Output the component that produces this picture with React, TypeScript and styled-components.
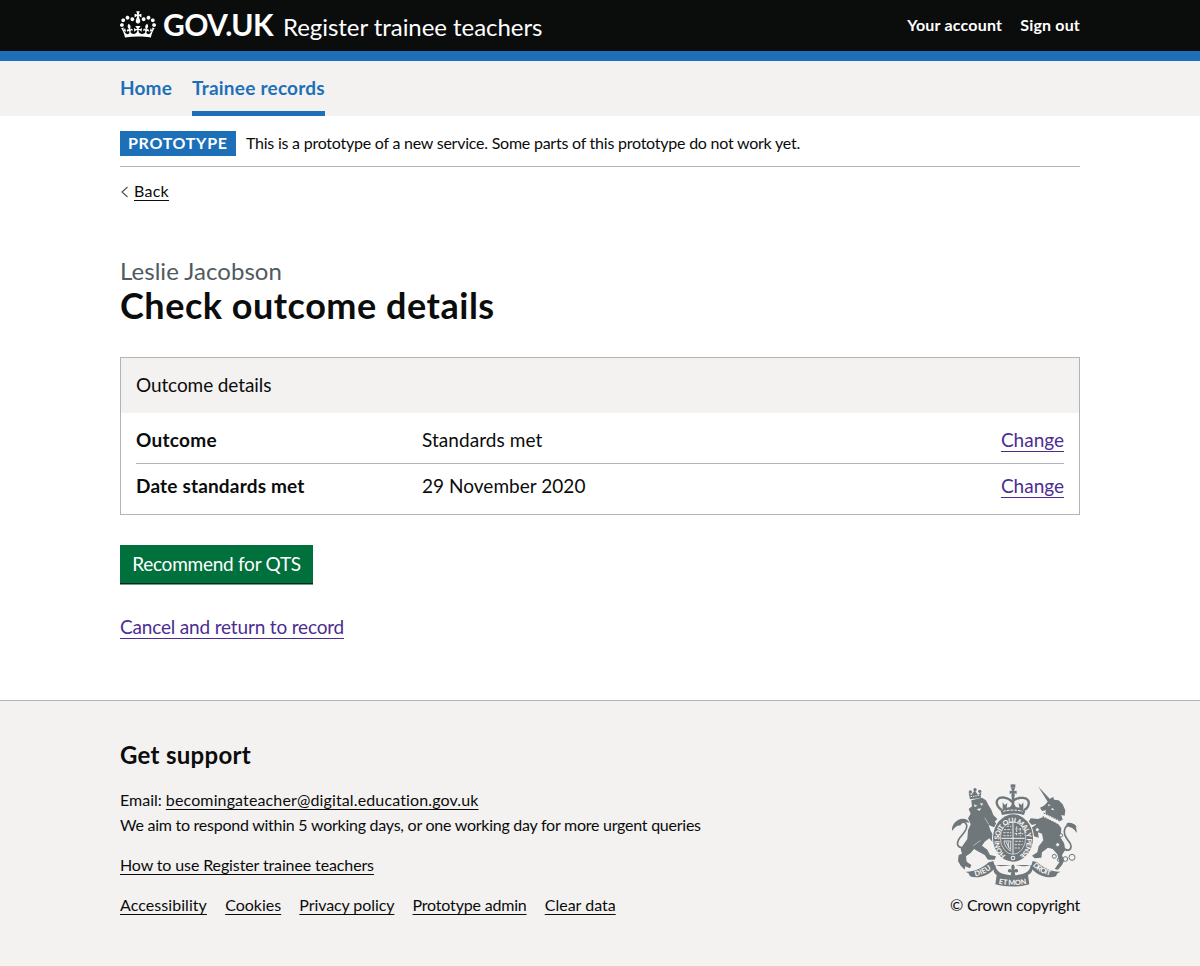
import React from 'react';
import styled, { createGlobalStyle } from 'styled-components';

const c = {
  black: '#0b0c0c',
  blue: '#1d70b8',
  grey: '#f3f2f1',
  border: '#b1b4b6',
  secondary: '#505a5f',
  visited: '#4c2c92',
  green: '#00703c',
  crest: '#6f777b',
};

const Global = createGlobalStyle`
  * { box-sizing: border-box; }
  html, body { margin: 0; padding: 0; }
  body {
    font-family: Lato, "Liberation Sans", sans-serif;
    color: ${c.black};
    background: #fff;
  }
`;

const Page = styled.div`
  min-height: 966px;
  display: flex;
  flex-direction: column;
`;

const Container = styled.div`
  width: 960px;
  margin: 0 auto;
`;

const Txt = styled.span<{ $track?: number }>`
  letter-spacing: ${p => p.$track ?? 0}px;
  white-space: nowrap;
`;

const Header = styled.header`
  background: ${c.black};
  border-bottom: 10px solid ${c.blue};
  height: 61px;
  color: #fff;
`;

const HeaderRow = styled(Container)`
  display: flex;
  height: 51px;
  align-items: flex-start;
`;

const CrownIcon = styled.svg`
  display: block;
  width: 36px;
  height: 27px;
  margin: 11px 7px 0 0;
  fill: #fff;
`;

const Logo = styled(Txt)`
  font-size: 30px;
  font-weight: 700;
  line-height: 36px;
  margin-top: 6px;
  width: 120px;
`;

const ServiceName = styled(Txt)`
  font-size: 24px;
  line-height: 30px;
  margin-top: 12px;
`;

const Account = styled.nav`
  margin-left: auto;
  padding-top: 15px;
  display: flex;
  gap: 18px;
  font-size: 16px;
  font-weight: 700;
  line-height: 20px;
`;

const NavBar = styled.nav`
  background: ${c.grey};
  height: 55px;
`;

const NavRow = styled(Container)`
  display: flex;
  gap: 20px;
`;

const NavItem = styled.a<{ $current?: boolean }>`
  height: 55px;
  padding-top: 14px;
  font-size: 19px;
  font-weight: 700;
  line-height: 25px;
  color: ${c.blue};
  border-bottom: ${p => (p.$current ? `5px solid ${c.blue}` : 'none')};
`;

const Phase = styled(Container)`
  display: flex;
  padding: 15px 0 10px;
  border-bottom: 1px solid ${c.border};
  font-size: 16px;
  line-height: 20px;
`;

const Tag = styled.strong`
  background: ${c.blue};
  color: #fff;
  width: 116px;
  height: 25px;
  padding: 2px 0 3px 8px;
  margin-right: 10px;
`;

const PhaseText = styled.span`
  padding-top: 2px;
`;

const BackRow = styled(Container)`
  display: flex;
  align-items: center;
  height: 20px;
  margin-top: 14px;
  font-size: 16px;
  line-height: 20px;
`;

const Chevron = styled.svg`
  width: 14px;
  height: 14px;
  margin-top: 1px;
  fill: none;
  stroke: ${c.secondary};
  stroke-width: 1.2;
`;

const Link = styled.a<{ $visited?: boolean; $offset?: number }>`
  color: ${p => (p.$visited ? c.visited : c.black)};
  text-decoration: underline;
  text-decoration-thickness: 1px;
  text-underline-offset: ${p => p.$offset ?? 3}px;
  text-decoration-skip-ink: none;
`;

const Main = styled(Container)`
  height: 499px;
  padding-top: 55px;
`;

const Caption = styled.div`
  color: ${c.secondary};
  font-size: 24px;
  line-height: 29px;
`;

const Title = styled.h1`
  margin: 0 0 32px;
  font-size: 36px;
  font-weight: 700;
  line-height: 40px;
`;

const Card = styled.section`
  border: 1px solid ${c.border};
  font-size: 19px;
  line-height: 25px;
`;

const CardHeader = styled.h2`
  margin: 0;
  height: 55px;
  padding: 14px 15px;
  background: ${c.grey};
  font-size: 19px;
  font-weight: 400;
  line-height: 25px;
`;

const CardBody = styled.dl`
  margin: 0;
  padding: 5px 15px;
`;

const Row = styled.div<{ $last?: boolean }>`
  display: grid;
  grid-template-columns: 286px 1fr auto;
  padding: 9px 0 11px;
  border-bottom: ${p => (p.$last ? 'none' : `1px solid ${c.border}`)};
`;

const Key = styled.dt`
  font-weight: 700;
`;

const Value = styled.dd`
  margin: 0;
`;

const Button = styled.button`
  display: block;
  margin: 30px 0 31px;
  width: 193px;
  height: 38px;
  padding: 6px 0 7px;
  border: 0;
  background: ${c.green};
  box-shadow: 0 1.5px 0 #002d18;
  color: #fff;
  font-family: inherit;
  font-size: 19px;
  line-height: 25px;
`;

const CancelRow = styled.div`
  font-size: 19px;
  line-height: 25px;
`;

const Footer = styled.footer`
  flex: 1;
  border-top: 1px solid ${c.border};
  background: ${c.grey};
`;

const FooterRow = styled(Container)`
  display: flex;
  justify-content: space-between;
  align-items: flex-end;
  padding-top: 39px;
  font-size: 16px;
  line-height: 20px;
`;

const FooterTitle = styled.h2`
  margin: 0 0 17px;
  font-size: 24px;
  line-height: 30px;
`;

const FooterLine = styled.div`
  line-height: 25px;
`;

const FooterPara = styled.div`
  margin: 18px 0 20px;
`;

const FooterLinks = styled.div`
  display: flex;
  gap: 18.2px;
`;

const Copyright = styled.div`
  width: 130px;
`;

const Crest = styled.svg`
  display: block;
  width: 130px;
  height: 105px;
  margin-bottom: 8px;
`;

const CrownLogo = () => (
  <CrownIcon viewBox="0 0 132 97">
    <path
      fillRule="evenodd"
      d="M25 30.2c3.5 1.5 7.7-.2 9.1-3.7 1.5-3.6-.2-7.8-3.9-9.2-3.6-1.4-7.6.3-9.1 3.9-1.4 3.5.3 7.5 3.9 9zM9 39.5c3.6 1.5 7.8-.2 9.2-3.7 1.5-3.6-.2-7.8-3.9-9.1-3.6-1.5-7.6.2-9.1 3.8-1.4 3.5.3 7.5 3.8 9zM4.4 57.2c3.5 1.5 7.7-.2 9.1-3.8 1.5-3.6-.2-7.7-3.9-9.1-3.5-1.5-7.6.3-9.1 3.8-1.4 3.5.3 7.6 3.9 9.1zm38.3-21.4c3.5 1.5 7.7-.2 9.1-3.8 1.5-3.6-.2-7.7-3.9-9.1-3.6-1.5-7.6.3-9.1 3.8-1.3 3.6.4 7.7 3.9 9.1zm64.4-5.6c-3.6 1.5-7.8-.2-9.1-3.7-1.5-3.6.2-7.8 3.8-9.2 3.6-1.4 7.7.3 9.2 3.9 1.3 3.5-.4 7.5-3.9 9zm15.9 9.3c-3.6 1.5-7.7-.2-9.1-3.7-1.5-3.6.2-7.8 3.7-9.1 3.6-1.5 7.7.2 9.2 3.8 1.5 3.5-.3 7.5-3.8 9zm4.7 17.7c-3.6 1.5-7.8-.2-9.2-3.8-1.5-3.6.2-7.7 3.9-9.1 3.6-1.5 7.7.3 9.2 3.8 1.3 3.5-.4 7.6-3.9 9.1zM89.3 35.8c-3.6 1.5-7.8-.2-9.2-3.8-1.4-3.6.2-7.7 3.9-9.1 3.6-1.5 7.7.3 9.2 3.8 1.4 3.6-.3 7.7-3.9 9.1zM69.7 17.7l8.9 4.7V9.3l-8.9 2.8c-.2-.3-.5-.6-.9-.9L72.4 0H59.6l3.5 11.2c-.3.3-.6.5-.9.9l-8.8-2.8v13.1l8.8-4.7c.3.3.6.7.9.9l-5 15.4v.1c-.2.8-.4 1.6-.4 2.4 0 4.1 3.1 7.5 7 8.1h.2c.3 0 .7.1 1 .1.4 0 .7 0 1-.1h.2c4-.6 7.1-4.1 7.1-8.1 0-.8-.1-1.7-.4-2.4V34l-5.1-15.4c.4-.2.7-.6 1-.9zM66 92.8c16.9 0 32.8 1.1 47.1 3.2 4-16.9 8.9-26.7 14-33.5l-9.6-3.4c1 4.9 1.1 7.2 0 10.2-1.5-1.4-3-4.3-4.2-8.7L108.6 76c2.8-2 5-3.2 7.5-3.3-4.4 9.4-10 11.9-13.6 11.2-4.3-.8-6.3-4.6-5.6-7.9 1-4.7 5.7-5.9 8-.5 4.3-8.7-3-11.4-7.6-8.8 7.1-7.2 7.9-13.5 2.1-21.1-8 6.1-8.1 12.3-4.5 20.8-4.7-5.4-12.1-2.5-9.5 6.2 3.4-5.2 7.9-2 7.2 3.1-.6 4.3-6.4 7.8-13.5 7.2-10.3-.9-10.9-8-11.2-13.8 2.5-.5 7.1 1.8 11 7.3L80.2 60c-4.1 4.4-8 5.3-12.3 5.4 1.4-4.4 8-11.6 8-11.6H55.5s6.4 7.2 7.9 11.6c-4.2-.1-8-1-12.3-5.4l1.4 16.4c3.9-5.5 8.5-7.7 10.9-7.3-.3 5.8-.9 12.8-11.1 13.8-7.2.6-12.9-2.9-13.5-7.2-.7-5 3.8-8.3 7.1-3.1 2.7-8.7-4.6-11.6-9.4-6.2 3.7-8.5 3.6-14.7-4.6-20.8-5.8 7.6-5 13.9 2.2 21.1-4.7-2.6-11.9.1-7.7 8.8 2.3-5.5 7.1-4.2 8.1.5.7 3.3-1.3 7.1-5.7 7.9-3.5.7-9-1.8-13.5-11.2 2.5.1 4.7 1.3 7.5 3.3l-4.7-15.4c-1.2 4.4-2.7 7.2-4.3 8.7-1.1-3-.9-5.3 0-10.2l-9.5 3.4c5 6.9 9.9 16.7 14 33.5 14.8-2.1 30.8-3.2 47.7-3.2z"
    />
  </CrownIcon>
);

const RoyalArms = () => (
  <Crest viewBox="30 21 390 315" fill={c.crest} stroke="none" fontFamily="Lato, sans-serif" fontWeight="900">
    {/* lion's tail */}
    <path d="M84 214C60 224 46 214 56 194C64 178 84 168 80 150C76 138 58 138 48 150" fill="none" stroke={c.crest} strokeWidth="5" />
    <path d="M36 168C34 152 44 138 62 132C76 128 86 136 88 144C76 138 64 144 60 152C54 150 44 156 36 168Z" />
    {/* lion */}
    <path d="M94 76L126 68L138 76L144 88L154 104L160 120L172 132L164 140L176 152L176 160L160 156L146 150L152 168L162 184L160 204L148 190L134 200L126 212L142 224L150 240L168 244L164 254L144 254L134 240L112 228L102 222L92 234L78 244L80 260L94 270L90 280L76 274L74 284L62 272L54 258L56 240L66 236L62 222L72 206L82 192L84 166L92 148L84 130L92 116L86 102L96 94Z" />
    <path d="M102 88l10 4l-8 4zM120 84l10 2l-6 6zM110 102l14-2l-6 8z" fill={c.grey} />
    <path d="M134 128L146 148M100 212L122 196" stroke={c.grey} strokeWidth="1.5" />
    <path d="M90 73L86 54L94 60L104 46L114 60L124 52L122 69Z" />
    <path d="M92 65L121 61" stroke={c.grey} strokeWidth="3" strokeDasharray="4 3" />
    <circle cx="105" cy="44" r="5" /><circle cx="91" cy="51" r="5" /><circle cx="119" cy="49" r="5" />
    {/* unicorn's tail */}
    <path d="M364 216C388 236 398 220 390 204C380 190 366 176 376 158C384 146 400 144 408 156" fill="none" stroke={c.crest} strokeWidth="5" />
    <path d="M410 174C412 154 400 140 382 144C376 150 380 154 388 156C398 158 404 164 410 174Z" />
    {/* unicorn */}
    <path d="M294 34L332 74L324 82Z" />
    <path d="M322 82L332 70L340 66L342 74L356 76L368 88L376 106L374 122L364 120L368 134L356 140L314 122L318 106L306 108L300 98L312 92Z" />
    <path d="M310 126L354 146L364 160L362 188L372 204L376 224L366 240L372 258L366 270L354 284L344 282L358 262L352 238L338 222L324 218L306 232L304 248L284 250L276 242L292 232L296 214L310 196L306 176L294 172L296 188L282 184L270 160L282 154L290 146L276 150L266 140L272 130L294 132Z" />
    <path d="M312 120L356 142" stroke={c.grey} strokeWidth="12" />
    <path d="M311 114L360 138M308 124L352 147" stroke={c.crest} strokeWidth="3" strokeDasharray="5 3" />
    <path d="M324 88l8 2l-6 4zM336 98l8 8l-10-2z" fill={c.grey} />
    <g fill="none" stroke={c.crest} strokeWidth="3">
      <circle cx="292" cy="164" r="6" fill={c.grey} />
      <circle cx="363" cy="181" r="5" fill={c.grey} />
      <circle cx="353" cy="209" r="6" fill={c.grey} />
      <circle cx="343" cy="244" r="6" />
      <circle cx="357" cy="254" r="5" />
      <circle cx="376" cy="252" r="7" />
      <circle cx="396" cy="247" r="9" />
    </g>
    {/* garter and shield */}
    <ellipse cx="219" cy="189" rx="63" ry="74" fill={c.grey} />
    <ellipse cx="219" cy="189" rx="60" ry="71" />
    <path id="garter" d="M198 242A41 53 0 1 1 240 242" fill="none" />
    <text fontSize="21" fill={c.grey}>
      <textPath href="#garter" textLength="252">HONI SOIT QUI MAL Y PENSE</textPath>
    </text>
    <ellipse cx="219" cy="189" rx="38" ry="49" fill="none" stroke={c.grey} strokeWidth="2" />
    <path d="M219 141V237M184 190H254" stroke={c.grey} strokeWidth="3" />
    <path d="M192 164h22M190 173h24M190 182h24M200 154h14M230 154v30M241 160v24M226 162h22M224 176h26M226 199h22M224 209h24M224 219h16" stroke={c.grey} strokeWidth="2.5" strokeDasharray="7 3" />
    <path d="M192 198C194 212 202 224 212 228V198ZM198 200L209 222M205 200V218" fill="none" stroke={c.grey} strokeWidth="2.5" />
    <circle cx="219" cy="249" r="7" fill={c.grey} /><circle cx="219" cy="249" r="4" />
    {/* royal crown */}
    <path d="M184 104C166 92 166 72 182 68C196 66 208 72 216 80C226 70 242 66 256 70C272 76 268 96 254 104" fill="none" stroke={c.crest} strokeWidth="7" strokeDasharray="7 1.5" strokeLinecap="round" />
    <path d="M215 60H223V98H215ZM209 47L216 48L213 38H225L222 48L230 47V57L223 55L225 64H213L216 55L209 57Z" />
    <path d="M212 28h14v10h-14z" />
    <path d="M188 82L194 90L202 84L200 98L210 96L219 84L228 96L238 98L236 84L244 90L250 82V104L256 108L252 120C230 114 208 114 186 120L182 108L188 104Z" />
    <path d="M190 109C208 104 230 104 248 109" fill="none" stroke={c.grey} strokeWidth="3" strokeDasharray="8 3" />
    {/* motto ribbon */}
    <path d="M76 290C98 292 128 280 146 262L160 258L166 278C144 304 112 312 90 304C88 296 84 292 76 290Z" />
    <path d="M362 290C340 292 310 280 292 262L278 258L272 278C294 304 326 312 348 304C350 296 354 292 362 290Z" />
    <path d="M162 270C158 286 162 296 170 300L166 328C198 337 240 337 268 328L264 300C276 294 280 286 276 270Z" />
    <path d="M166 268C166 288 182 300 219 301C256 300 272 288 272 268C258 280 242 270 219 270C196 270 180 280 166 268Z" fill={c.grey} />
    <path d="M219 268C212 274 213 280 217 286C210 278 202 282 204 290C208 294 213 292 214 290L212 302H226L224 290C225 292 230 294 234 290C236 282 228 278 221 286C225 280 226 274 219 268Z" />
    <path id="dieu" d="M106 304C126 300 146 290 162 274" fill="none" />
    <path id="droit" d="M278 271C292 288 310 298 338 304" fill="none" />
    <path id="mon" d="M176 326C202 332 234 332 262 326" fill="none" />
    <g fill={c.grey} fontSize="22">
      <text><textPath href="#dieu" textLength="54">DIEU</textPath></text>
      <text><textPath href="#droit" textLength="62">DROIT</textPath></text>
      <text><textPath href="#mon" textLength="84">ET MON</textPath></text>
    </g>
  </Crest>
);

const rows = [
  { key: 'Outcome', keyTrack: 0.3, value: 'Standards met', valueTrack: 0.06 },
  { key: 'Date standards met', keyTrack: 0.18, value: '29 November 2020', valueTrack: 0.03 },
];

const footerLinks: [string, number][] = [
  ['Accessibility', 0.06],
  ['Cookies', 0],
  ['Privacy policy', -0.09],
  ['Prototype admin', -0.19],
  ['Clear data', 0],
];

export default function App() {
  return (
    <Page>
      <Global />
      <Header>
        <HeaderRow>
          <CrownLogo />
          <Logo $track={-0.6}>GOV.UK</Logo>
          <ServiceName $track={-0.05}>Register trainee teachers</ServiceName>
          <Account>
            <Txt $track={0.2}>Your account</Txt>
            <Txt $track={0.18}>Sign out</Txt>
          </Account>
        </HeaderRow>
      </Header>
      <NavBar>
        <NavRow>
          <NavItem><Txt $track={0.17}>Home</Txt></NavItem>
          <NavItem $current><Txt $track={0.24}>Trainee records</Txt></NavItem>
        </NavRow>
      </NavBar>
      <Phase>
        <Tag><Txt $track={0.7}>PROTOTYPE</Txt></Tag>
        <PhaseText>
          <Txt $track={-0.235}>This is a prototype of a new service. Some parts of this prototype do not work yet.</Txt>
        </PhaseText>
      </Phase>
      <BackRow>
        <Chevron viewBox="0 0 14 14"><path d="M7.5 2L2 7L7.5 12" /></Chevron>
        <Link><Txt $track={0.27}>Back</Txt></Link>
      </BackRow>
      <Main as="main">
        <Caption><Txt $track={0.04}>Leslie Jacobson</Txt></Caption>
        <Title><Txt $track={0.52}>Check outcome details</Txt></Title>
        <Card>
          <CardHeader><Txt $track={-0.1}>Outcome details</Txt></CardHeader>
          <CardBody>
            {rows.map((r, i) => (
              <Row key={r.key} $last={i === rows.length - 1}>
                <Key><Txt $track={r.keyTrack}>{r.key}</Txt></Key>
                <Value><Txt $track={r.valueTrack}>{r.value}</Txt></Value>
                <Value><Link $visited $offset={4}>Change</Link></Value>
              </Row>
            ))}
          </CardBody>
        </Card>
        <Button><Txt $track={-0.25}>Recommend for QTS</Txt></Button>
        <CancelRow><Link $visited $offset={4}><Txt $track={-0.17}>Cancel and return to record</Txt></Link></CancelRow>
      </Main>
      <Footer>
        <FooterRow>
          <div>
            <FooterTitle><Txt $track={0.29}>Get support</Txt></FooterTitle>
            <FooterLine>
              Email: <Link><Txt $track={0.13}>becomingateacher@digital.education.gov.uk</Txt></Link>
            </FooterLine>
            <FooterLine>
              <Txt $track={-0.25}>We aim to respond within 5 working days, or one working day for more urgent queries</Txt>
            </FooterLine>
            <FooterPara><Link><Txt $track={-0.12}>How to use Register trainee teachers</Txt></Link></FooterPara>
            <FooterLinks>
              {footerLinks.map(([label, track]) => (
                <Link key={label}><Txt $track={track}>{label}</Txt></Link>
              ))}
            </FooterLinks>
          </div>
          <Copyright>
            <RoyalArms />
            <Txt $track={-0.25}>© Crown copyright</Txt>
          </Copyright>
        </FooterRow>
      </Footer>
    </Page>
  );
}
